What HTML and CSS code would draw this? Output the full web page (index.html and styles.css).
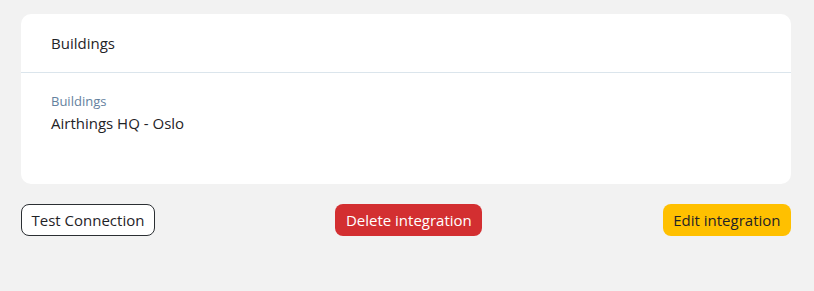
FILE: index.html
```html
<!DOCTYPE html>
<html>
<head>
<meta charset="utf-8">
<link rel="stylesheet" href="styles.css">
</head>
<body>
<div class="page">
  <div class="card">
    <div class="card-header">Buildings</div>
    <div class="card-body">
      <div class="field-label">Buildings</div>
      <div class="field-value">Airthings HQ - Oslo</div>
    </div>
  </div>
  <div class="actions">
    <button class="btn btn-outline">Test Connection</button>
    <button class="btn btn-danger">Delete integration</button>
    <button class="btn btn-warning">Edit integration</button>
  </div>
</div>
</body>
</html>
```
FILE: styles.css
```css
* { box-sizing: border-box; }
html, body { margin: 0; padding: 0; }
body {
  background: #f2f2f2;
  font-family: "Open Sans", "Noto Sans", sans-serif;
  color: #1f2327;
  width: 814px;
  height: 291px;
}
.page {
  padding: 14px 23px 0 21px;
}
.card {
  background: #ffffff;
  border-radius: 10px;
  height: 170px;
}
.card-header {
  height: 59px;
  padding: 0 30px;
  display: flex;
  align-items: center;
  font-size: 15px;
  border-bottom: 1px solid #dbe5ec;
}
.card-body {
  padding: 19px 30px;
}
.field-label {
  font-size: 13px;
  color: #64819e;
  line-height: 18px;
}
.field-value {
  font-size: 15px;
  line-height: 22px;
  margin-top: 2px;
}
.actions {
  display: flex;
  justify-content: space-between;
  margin-top: 20px;
}
.btn {
  height: 32px;
  font-family: inherit;
  font-size: 15px;
  padding: 0 9.5px;
  border-radius: 8px;
  border: 1px solid transparent;
  cursor: pointer;
}
.btn-outline {
  background: #ffffff;
  border-color: #2b2f33;
  color: #1f2327;
}
.btn-danger {
  background: #d32f31;
  color: #ffffff;
}
.btn-warning {
  background: #ffc000;
  color: #1f2327;
}
```
